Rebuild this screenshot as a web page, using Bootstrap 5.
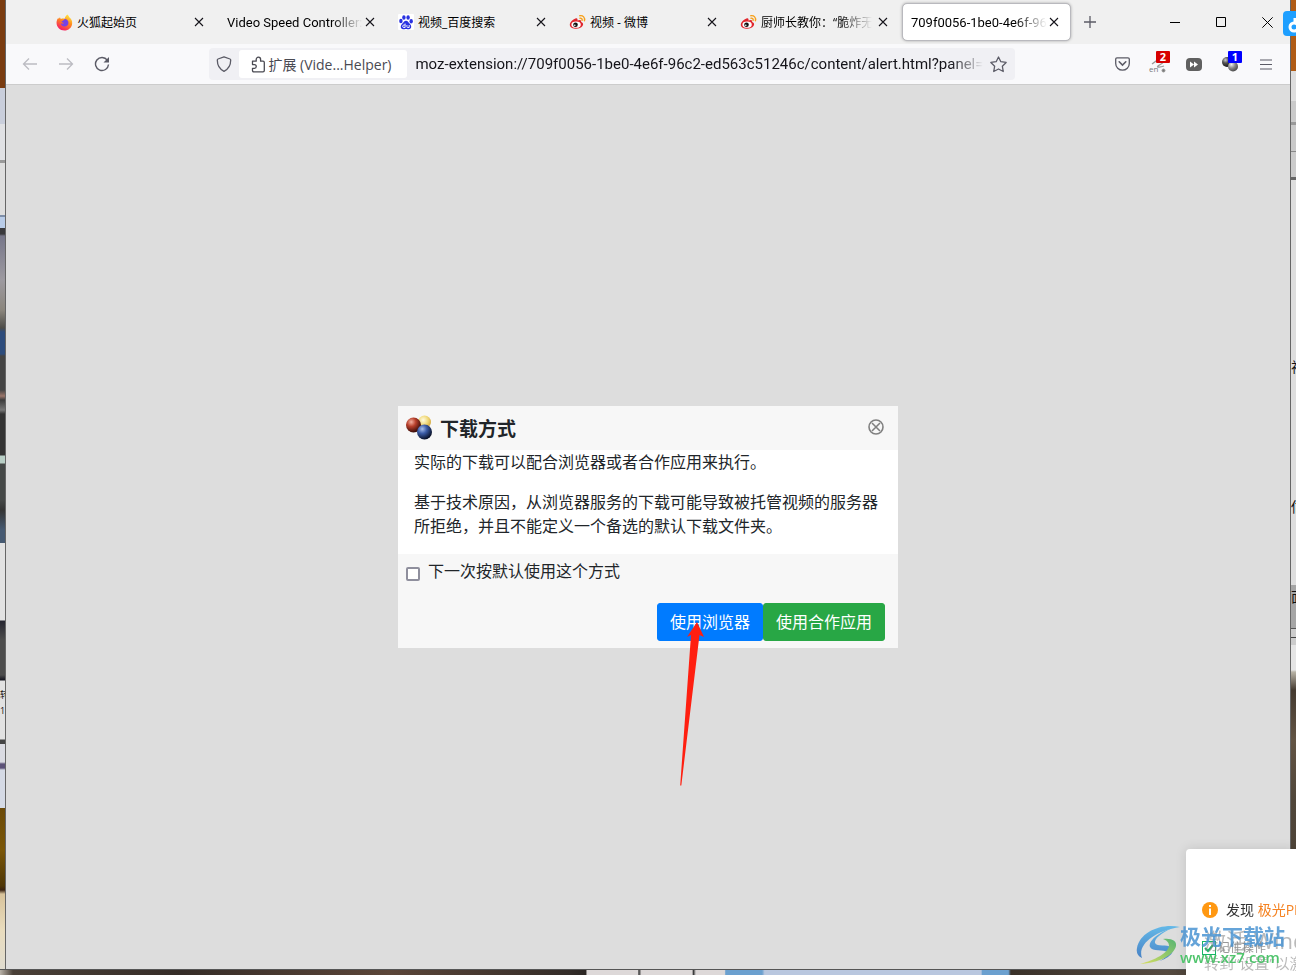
<!DOCTYPE html>
<html lang="zh-CN">
<head>
<meta charset="utf-8">
<meta name="viewport" content="width=device-width, initial-scale=1">
<title>下载方式</title>
<link href="https://cdn.jsdelivr.net/npm/bootstrap@5.3.0/dist/css/bootstrap.min.css" rel="stylesheet">
<style>
  body { font-family: "Open Sans", "Noto Sans CJK SC", sans-serif; color: #212529; background: #3a322b; }
  button { font-family: inherit; }
  .desktop { display: grid; grid-template-columns: 6px minmax(0, 1fr) 6px; grid-template-rows: minmax(0, 1fr) 6px; height: 100vh; overflow: hidden; }
  .edge { position: relative; overflow: hidden; font-size: 14px; line-height: 16px; color: #111; }
  .edge span { position: absolute; left: 0; white-space: nowrap; }
  .edge-left { border-right: 1px solid #666; background: linear-gradient(#7a3c10 0 88px, #c9cedb 88px 124px, #e0e1e4 124px 160px, #999 160px 163px, #dedede 163px 215px, #7e8ea8 215px 217px, #b9cce8 217px 228px, #3a3a3d 228px 234px, #77778a 236px, #9d9aa0 280px, #8b867d 310px, #4d4c48 328px, #2d4c7c 332px 354px, #444 356px 390px, #9b766a 396px, #3c3c3c 400px, #777 410px, #333 414px 455px, #b9cfc6 456px 463px, #454847 464px 500px, #343434 510px, #465a72 530px 543px, #e2e2e2 543px 620px, #262630 621px, #4c4c4c 640px 675px, #15151f 680px, #e2e2e2 681px 739px, #444 740px 744px, #dadbe2 744px 762px, #5c5178 764px 768px, #d5dae5 770px 808px, #6b4a08 808px, #7a5607 850px, #4e3606 886px, #3a2210 890px, #d8c39b 894px, #e9dcbd 930px, #e0dcd0 100%); }
  .edge-right { border-left: 1px solid #666; background: linear-gradient(#b05c16 0 71px, #dedede 71px 101px, #cacaca 101px 122px, #999 122px 125px, #c9c9c9 125px 151px, #888 151px 152px, #cbcbcb 152px 177px, #666 177px 180px, #dedede 180px 585px, #a5a5a5 585px 628px, #555 628px 629px, #ccc 629px 637px, #444 637px 638px, #ccc 638px 645px, #e5e5e5 645px 670px, #b8b3a6 672px, #443a30 690px, #625444 740px, #50463a 800px, #463c32 100%); }
  .edge-bottom { grid-column: 1 / -1; border-top: 1px solid #555; background: linear-gradient(90deg, #b9b2a8 0, #4a4037 1%, #352c27 14%, #5b4538 30%, #332c28 44%, #2a2522 45.2%, #ddd8d8 45.3% 49.2%, #333 49.3%, #ddd8d8 49.5% 53.4%, #333 53.5%, #ddd8d8 53.7% 55.9%, #6ba0cf 56% 58.8%, #b9c7df 59% 75.7%, #6ba0cf 75.8% 77.8%, #3a3129 78%, #554a40 90%, #30281f); }
  .window { background: #ddd; min-width: 0; }
  .tabstrip { height: 44px; background: #f0f0f0; padding-left: 40px; }
  .tab-item { flex: 0 1 169px; min-width: 0; height: 38px; padding: 0 9px 0 8px; border: 1px solid transparent; background-clip: padding-box; border-radius: 5px; margin: 0 1px; }
  .tab-item.current { background-color: #fff; border-color: #b9b9be; box-shadow: 0 0 3px rgba(0,0,0,.3); }
  .tab-item a { flex: 1 1 0; min-width: 0; overflow: hidden; white-space: nowrap; font-size: 12px; line-height: 20px; padding-top: 1px; color: #000; text-decoration: none; }
  .tab-item a.latin { font-family: Roboto, "Noto Sans CJK SC", sans-serif; font-size: 13px; }
  .tab-item a.fades { -webkit-mask-image: linear-gradient(90deg, #000 calc(100% - 32px), transparent); mask-image: linear-gradient(90deg, #000 calc(100% - 32px), transparent); }
  .bare { border: 0; background: none; padding: 0; display: inline-flex; align-items: center; justify-content: center; flex: none; color: #5b5b66; }
  .tab-item .bare { width: 14px; height: 20px; color: #15141a; }
  .capbtn { width: 46px; height: 44px; color: #000; }
  .toolbar { height: 41px; background: #f9f9fb; border-bottom: 1px solid #ccc; padding: 0 6px; }
  .tool { width: 36px; height: 32px; position: relative; }
  .tool .count { position: absolute; left: 16px; top: 3px; width: 14px; height: 12px; color: #fff; font-size: 11px; font-weight: 700; line-height: 12px; border-radius: 1px; }
  .spring { flex: 1 1 0; }
  .urlbar { flex: 9 1 0; min-width: 0; height: 32px; background: #f0f0f4; border-radius: 4px; }
  .origin { height: 28px; width: 168px; background: #fff; border-radius: 3px; font-size: 14px; color: #4a4a52; white-space: nowrap; gap: 2px; padding-right: 4px; }
  .urlbar input { flex: 1 1 0; min-width: 0; border: 0; background: none; outline: 0; padding: 0; font-family: Roboto, "Noto Sans CJK SC", sans-serif; font-size: 15px; line-height: 24px; color: #15141a; -webkit-mask-image: linear-gradient(90deg, #000 calc(100% - 32px), transparent); mask-image: linear-gradient(90deg, #000 calc(100% - 32px), transparent); }
  .page { min-height: 0; }
  .dialog-box { width: 500px; max-width: 100%; background: #fff; position: relative; }
  .dialog-head { height: 44px; background: #f7f7f7; padding: 0 14px 0 8px; }
  .dialog-head h1 { font-size: 19px; line-height: 24px; font-weight: 700; padding-top: 2px; }
  .dialog-head .bare { padding-bottom: 2px; }
  .dialog-text p { line-height: 24px; font-size: 16px; }
  .dialog-foot { background: #f7f7f7; padding: 5px 13px 7px 8px; }
  .dialog-foot label { line-height: 24px; }
  .dialog-foot input { appearance: none; width: 14px; height: 14px; border: 2px solid #8f8f9d; border-radius: 2px; background: #fff; margin: 6px 0 0; }
  .dialog-foot .btn { --bs-btn-border-radius: 3px; color: #fff; height: 38px; white-space: nowrap; }
  .btn-browser { --bs-btn-bg: #007bff; --bs-btn-border-color: #007bff; }
  .btn-coapp { --bs-btn-bg: #28a745; --bs-btn-border-color: #28a745; }
  .pointer { position: absolute; left: 280px; top: 212px; pointer-events: none; }
  .notice { position: fixed; right: 0; bottom: 0; width: 110px; height: 126px; background: #fff; border-top-left-radius: 4px; box-shadow: 0 0 12px rgba(0,0,0,.12); overflow: hidden; white-space: nowrap; padding: 51px 0 0 16px; font-size: 14px; line-height: 20px; color: #333; }
  .notice a { color: #f58220; text-decoration: none; }
  .notice .remember { margin-top: 18px; gap: 2px; line-height: 20px; color: #999; }
  .notice input { appearance: none; width: 14px; height: 14px; margin: 0; border: 1px solid #17b566; background: #fff; flex: none; }
  .notice label { font-size: 12px; }
  .notice svg.tick { position: absolute; left: 17px; top: 93px; }
  .activate { position: fixed; right: 0; bottom: 0; width: 92px; height: 46px; overflow: hidden; white-space: nowrap; color: rgba(130,130,130,.55); font-size: 22px; line-height: 22px; }
  .activate small { display: block; font-size: 15px; line-height: 24px; }
  .sitemark { position: fixed; right: 8px; bottom: 9px; width: 152px; color: #4b94d3; }
  .sitemark strong { display: block; font-size: 21px; line-height: 24px; opacity: .85; white-space: nowrap; }
  .sitemark em { display: block; font-style: normal; font-size: 15px; line-height: 18px; font-weight: 600; color: #4fc46c; }
  .docked { position: fixed; right: 0; top: 11px; width: 13px; height: 25px; background: #1e9fff; border-radius: 4px 0 0 4px; overflow: hidden; }
</style>
</head>
<body>
<svg width="0" height="0" class="position-absolute" aria-hidden="true">
  <defs>
    <radialGradient id="red" cx=".35" cy=".3" r=".75"><stop offset="0" stop-color="#f3b0a0"/><stop offset=".4" stop-color="#b8402c"/><stop offset="1" stop-color="#2a0604"/></radialGradient>
    <radialGradient id="blue" cx=".35" cy=".3" r=".75"><stop offset="0" stop-color="#a9bfea"/><stop offset=".4" stop-color="#3c5da8"/><stop offset="1" stop-color="#050a1c"/></radialGradient>
    <radialGradient id="gold" cx=".4" cy=".35" r=".75"><stop offset="0" stop-color="#fffbe0"/><stop offset=".5" stop-color="#f0d878"/><stop offset="1" stop-color="#c9962c"/></radialGradient>
    <radialGradient id="dark" cx=".35" cy=".3" r=".75"><stop offset="0" stop-color="#ccc"/><stop offset=".4" stop-color="#555"/><stop offset="1" stop-color="#111"/></radialGradient>
    <radialGradient id="grey" cx=".35" cy=".3" r=".75"><stop offset="0" stop-color="#eee"/><stop offset=".5" stop-color="#888"/><stop offset="1" stop-color="#444"/></radialGradient>
    <linearGradient id="fire" x1=".8" y1="0" x2=".3" y2="1"><stop offset="0" stop-color="#fff044"/><stop offset=".45" stop-color="#ff8a1c"/><stop offset="1" stop-color="#f5156c"/></linearGradient>
    <linearGradient id="swirl" x1="0" y1="0" x2="0" y2="1"><stop offset="0" stop-color="#4fb3ea"/><stop offset="1" stop-color="#2f73c2"/></linearGradient>
    <linearGradient id="leaf" x1="1" y1="0" x2="0" y2="1"><stop offset="0" stop-color="#3fae62"/><stop offset="1" stop-color="#d9e04c"/></linearGradient>
    <symbol id="cross" viewBox="0 0 10 10"><path d="M1 1l8 8M9 1l-8 8" stroke="currentColor" stroke-width="1.1"/></symbol>
    <symbol id="weibo" viewBox="0 0 16 16">
      <path d="M6.500 4.200C3.800 5 .3 8.200.3 10.700c0 2.600 3.200 4 6.500 4 4.200 0 6.800-2.300 6.800-4.400 0-1.500-1.200-2.100-2-2.300.5-1.500-.6-2.800-3.700-1.500.5-1.600-.1-2.600-1.400-2.300z" fill="#e0262d"/>
      <ellipse cx="6.600" cy="10.700" rx="4.700" ry="3.100" fill="#fff"/><circle cx="6" cy="10.800" r="2.300" fill="#111"/><circle cx="5.300" cy="11.200" r=".8" fill="#fff"/>
      <path d="M10.300 1.700c3.200-.6 5.500 2 4.600 5M10.500 4.200c1.500-.3 2.500.8 2.100 2.200" fill="none" stroke="#f6a01a" stroke-width="1.400" stroke-linecap="round"/>
    </symbol>
  </defs>
</svg>

<div class="desktop">
  <div class="edge edge-left"><span style="top:687px;font-size:9px">转</span><span style="top:703px;font-size:9px">1.</span></div>

  <div class="window d-flex flex-column">
    <header>
      <div class="tabstrip d-flex align-items-center">
        <div class="tab-item d-flex align-items-center gap-1">
          <svg width="17" height="17" viewBox="0 0 16 16" class="flex-shrink-0"><path d="M10.700.5c1.200.8 1.500 1.900 1.800 2.600 1.900 1.300 3 3.300 2.700 6-.4 3.700-3.400 6.400-7.200 6.400-4.300 0-7.500-3.200-7.500-7.300 0-2.200.8-3.700 1.700-4.700l.3 1.300 1.200-1.700.8 1.500c1.200-.6 2.800-.5 3.800-.4C8.500 3.300 9.200 1.700 10.700.5z" fill="url(#fire)"/><path d="M8.200 4.700c2 .1 3.700 1.500 3.500 3.700-.1 2-1.700 3.300-3.600 3.300-2 0-3.500-1.400-3.500-3 1 .7 2.200.5 3-.2-1.700-.2-2.300-1-2.400-1.700 1-.3 2-.8 3-2.100z" fill="#7542e5"/></svg>
          <a href="#">火狐起始页</a>
          <button class="bare" aria-label="关闭标签页"><svg width="10" height="10"><use href="#cross"/></svg></button>
        </div>
        <div class="tab-item d-flex align-items-center">
          <a href="#" class="fades latin">Video Speed Controller: 扩展</a>
          <button class="bare" aria-label="关闭标签页"><svg width="10" height="10"><use href="#cross"/></svg></button>
        </div>
        <div class="tab-item d-flex align-items-center gap-1">
          <svg width="16" height="16" viewBox="0 0 16 16" class="flex-shrink-0"><rect width="16" height="16" rx="1" fill="#fff"/><g fill="#2932e1"><ellipse cx="2.900" cy="7" rx="1.700" ry="2.200"/><ellipse cx="5.900" cy="3.500" rx="1.700" ry="2.300"/><ellipse cx="10.100" cy="3.500" rx="1.700" ry="2.300"/><ellipse cx="13.200" cy="7.200" rx="1.700" ry="2.200"/><path d="M8 6.700c2 0 2.600 2 4 3.400 1.800 1.700 1.700 5.100-1.100 5.100-1.200 0-1.700-.3-2.900-.3s-1.700.3-2.900.3c-2.800 0-2.900-3.400-1.100-5.100C5.400 8.700 6 6.700 8 6.700z"/></g><path d="M7.100 9.500v4H5.900a1.200 1.200 0 010-2.500h1.200M8.900 11v1.700q0 .8.800.8h1.500V11" fill="none" stroke="#fff" stroke-width=".9"/></svg>
          <a href="#">视频_百度搜索</a>
          <button class="bare" aria-label="关闭标签页"><svg width="10" height="10"><use href="#cross"/></svg></button>
        </div>
        <div class="tab-item d-flex align-items-center gap-1">
          <svg width="17" height="16" class="flex-shrink-0"><use href="#weibo"/></svg>
          <a href="#">视频 - 微博</a>
          <button class="bare" aria-label="关闭标签页"><svg width="10" height="10"><use href="#cross"/></svg></button>
        </div>
        <div class="tab-item d-flex align-items-center gap-1">
          <svg width="17" height="16" class="flex-shrink-0"><use href="#weibo"/></svg>
          <a href="#" class="fades">厨师长教你：“脆炸无骨鸡”</a>
          <button class="bare" aria-label="关闭标签页"><svg width="10" height="10"><use href="#cross"/></svg></button>
        </div>
        <div class="tab-item current d-flex align-items-center">
          <a href="#" class="fades latin">709f0056-1be0-4e6f-96c2-ed563c51246c</a>
          <button class="bare" aria-label="关闭标签页"><svg width="10" height="10"><use href="#cross"/></svg></button>
        </div>
        <button class="bare tool" aria-label="新建标签页"><svg width="12" height="12"><path d="M6 0v12M0 6h12" stroke="currentColor" stroke-width="1.300"/></svg></button>
        <div class="d-flex ms-auto">
          <button class="bare capbtn" aria-label="最小化"><svg width="10" height="10"><path d="M0 5.500h10" stroke="currentColor"/></svg></button>
          <button class="bare capbtn" aria-label="最大化"><svg width="10" height="10"><path d="M.5.500h9v9h-9z" fill="none" stroke="currentColor"/></svg></button>
          <button class="bare capbtn" aria-label="关闭"><svg width="11" height="11" viewBox="0 0 10 10"><path d="M.3.300l9.400 9.400M9.700.300L.3 9.700" stroke="currentColor" stroke-width=".9"/></svg></button>
        </div>
      </div>

      <div class="toolbar d-flex align-items-center">
        <button class="bare tool" aria-label="后退"><svg width="16" height="16" fill="none" stroke="#bcbcc2" stroke-width="1.300"><path d="M15 8H1.500M7 2.500L1.500 8 7 13.500"/></svg></button>
        <button class="bare tool" aria-label="前进"><svg width="16" height="16" fill="none" stroke="#bcbcc2" stroke-width="1.300"><path d="M1 8h13.500M9 2.500L14.500 8 9 13.500"/></svg></button>
        <button class="bare tool" aria-label="刷新"><svg width="16" height="16" fill="none" stroke="currentColor" stroke-width="1.400"><path d="M13.300 4.200A6.500 6.500 0 1014.500 8.500"/><path d="M15 1v5.500H9.500z" fill="currentColor" stroke="none"/></svg></button>
        <div class="spring"></div>
        <div class="urlbar d-flex align-items-center">
          <button class="bare" style="width:30px" aria-label="跟踪保护"><svg width="16" height="16" fill="none" stroke="currentColor" stroke-width="1.300"><path d="M8 .8l6 2.200q.7.300.7 1.100C14.700 9 12.500 13.200 8 15.300 3.500 13.200 1.300 9 1.300 4.100q0-.8.700-1.100z" stroke-linejoin="round"/></svg></button>
          <button class="bare origin"><svg width="15" height="17" fill="none" stroke="currentColor" stroke-width="1.300" stroke-linejoin="round"><path d="M1.500 5.200h3.700V3.400a2.200 2.200 0 014.400 0v1.800h2.400q1.300 0 1.300 1.300v8q0 1.300-1.300 1.300H2.800q-1.300 0-1.300-1.300v-2.200h1.900a1.800 1.800 0 000-3.700H1.500z"/></svg>扩展 (Vide...Helper)</button>
          <input class="ms-2" type="text" aria-label="地址" value="moz-extension://709f0056-1be0-4e6f-96c2-ed563c51246c/content/alert.html?panel=dlmode">
          <button class="bare" style="width:32px" aria-label="收藏"><svg width="17" height="17" viewBox="0 0 16 16" fill="none" stroke="currentColor" stroke-width="1.200" stroke-linejoin="round"><path d="M8 .9l2.200 4.500 5 .7-3.600 3.500.9 5L8 12.200l-4.500 2.400.9-5L.8 6.100l5-.7z"/></svg></button>
        </div>
        <div class="spring"></div>
        <button class="bare tool" aria-label="Pocket"><svg width="15" height="14" fill="none" stroke="currentColor" stroke-width="1.300"><path d="M2 .8h11q1.300 0 1.300 1.300v4.300a6.800 6.800 0 01-13.600 0V2.100Q.7.800 2 .8z"/><path d="M4.200 4.800l3.300 3.300 3.300-3.300" stroke-width="1.600" stroke-linecap="round"/></svg></button>
        <button class="bare tool" aria-label="翻译"><svg width="18" height="18" fill="none" stroke="#999"><path d="M3 9C8 5 14 2 15 5s-4 4-6 6 3 1 6 0" stroke-width="1.300"/><circle cx="14.500" cy="15.500" r="1.500" fill="#777"/><text x="0" y="17" font-size="8" fill="#777" stroke="none">en</text></svg><span class="count" style="background:#d70000">2</span></button>
        <button class="bare tool" aria-label="视频速度"><svg width="16" height="13"><rect width="16" height="13" rx="4" fill="#606060"/><path d="M4 3.500l4 3-4 3zM8 3.500l4 3-4 3z" fill="#fff"/></svg></button>
        <button class="bare tool" aria-label="Video DownloadHelper"><svg width="18" height="16"><circle cx="6" cy="6" r="5" fill="url(#dark)"/><circle cx="12" cy="10.500" r="5" fill="url(#grey)"/></svg><span class="count" style="background:#00f">1</span></button>
        <button class="bare tool" aria-label="菜单"><svg width="12" height="11" stroke="currentColor" stroke-width="1.200"><path d="M0 1h12M0 5.500h12M0 10h12"/></svg></button>
      </div>
    </header>

    <main class="page flex-grow-1 d-flex align-items-center justify-content-center">
      <section class="dialog-box">
        <div class="dialog-head d-flex align-items-center gap-2">
          <svg width="26" height="26"><circle cx="18.500" cy="7" r="6.500" fill="url(#gold)"/><circle cx="7.500" cy="10" r="7.500" fill="url(#red)"/><circle cx="18.500" cy="17" r="7.500" fill="url(#blue)"/></svg>
          <h1 class="mb-0 me-auto">下载方式</h1>
          <button class="bare" aria-label="关闭" style="color:#808080"><svg width="16" height="16" fill="none" stroke="currentColor" stroke-width="1.600"><circle cx="8" cy="8" r="7"/><path d="M4 4l8 8M12 4l-8 8"/></svg></button>
        </div>
        <div class="dialog-text px-3 pb-3">
          <p class="mb-3">实际的下载可以配合浏览器或者合作应用来执行。</p>
          <p class="mb-0">基于技术原因，从浏览器服务的下载可能导致被托管视频的服务器所拒绝，并且不能定义一个备选的默认下载文件夹。</p>
        </div>
        <div class="dialog-foot">
          <div class="d-flex align-items-center gap-2">
            <input type="checkbox" id="remember-mode">
            <label for="remember-mode">下一次按默认使用这个方式</label>
          </div>
          <div class="d-flex justify-content-end pt-3 mt-1">
            <button class="btn btn-browser" type="button">使用浏览器</button>
            <button class="btn btn-coapp" type="button">使用合作应用</button>
          </div>
        </div>
        <svg class="pointer" width="28" height="170" aria-hidden="true"><path d="M19 4L26 19 21.500 17 3.300 167.500H2.200L13 17 9 19z" fill="#ff1f10"/></svg>
      </section>
    </main>
  </div>

  <div class="edge edge-right"><span style="top:359px">视</span><span style="top:499px">估</span><span style="top:589px">面</span></div>
  <div class="edge-bottom"></div>
</div>

<div class="docked"><svg width="13" height="25" fill="none" stroke="#fff" stroke-width="3"><circle cx="11" cy="15" r="4"/><path d="M12 10V6"/></svg></div>

<aside class="notice">
  <div class="d-flex align-items-center gap-2">
    <svg width="16" height="16" class="flex-shrink-0"><circle cx="8" cy="8" r="8" fill="#ff9812"/><path d="M8 3v2M8 6.500V13" stroke="#fff" stroke-width="2"/></svg>
    <span>发现 <a href="#">极光PDF</a></span>
  </div>
  <div class="remember d-flex align-items-center">
    <input type="checkbox" id="keep" checked><label for="keep">记住操作</label>
  </div>
  <svg class="tick" width="12" height="12" fill="none" stroke="#17b566" stroke-width="2"><path d="M2 6l3 3 5-6"/></svg>
</aside>
<div class="activate">激活 Windows<small>转到“设置”以激活 Windows。</small></div>
<div class="sitemark d-flex align-items-center">
  <svg width="44" height="42" viewBox="0 0 44 42" class="flex-shrink-0" opacity=".85"><path d="M44 3C25-1 4 8 1 24c-1 5 1 8 5 10C1 21 18 7 44 3z" fill="url(#swirl)"/><path d="M36 4C23 8 12 17 14 23c2 5 14 2 17 5 2 3-3 7-8 9 11-3 17-10 12-14-4-3-14 0-16-4-1-4 6-10 17-15z" fill="url(#swirl)"/><path d="M27 15c9-1 14 2 13 7-2 9-17 17-36 18 15-4 28-11 29-18 0-4-3-6-6-7z" fill="url(#leaf)"/></svg>
  <div><strong>极光下载站</strong><em>www.xz7.com</em></div>
</div>
<script src="https://cdn.jsdelivr.net/npm/bootstrap@5.3.0/dist/js/bootstrap.bundle.min.js"></script>
</body>
</html>
